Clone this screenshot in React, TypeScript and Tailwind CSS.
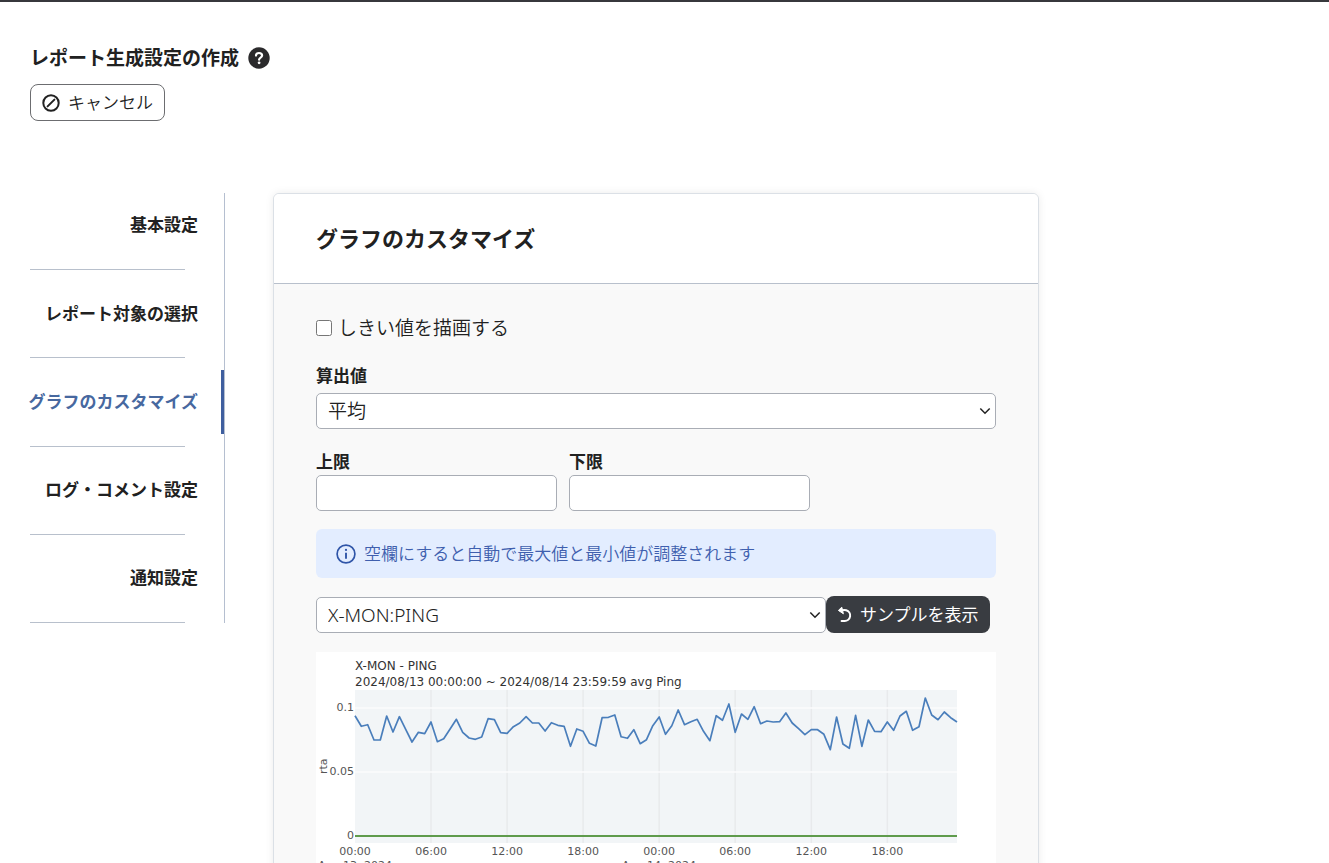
import { useState } from "react";

const steps = [
  "基本設定",
  "レポート対象の選択",
  "グラフのカスタマイズ",
  "ログ・コメント設定",
  "通知設定",
];

// 30-minute averages, 385 units = 0.1
const samples = [
  361, 329, 334, 288, 288, 360, 312, 358, 320, 282, 311, 307, 342, 283, 292, 321,
  350, 311, 294, 290, 297, 352, 349, 310, 308, 328, 339, 358, 339, 339, 315, 340,
  332, 329, 269, 321, 314, 278, 270, 355, 356, 363, 298, 293, 319, 277, 289, 331,
  357, 305, 331, 378, 334, 343, 350, 314, 286, 361, 347, 396, 311, 366, 350, 388,
  337, 345, 342, 343, 369, 339, 322, 304, 319, 319, 305, 259, 357, 276, 263, 362,
  269, 348, 314, 313, 342, 317, 360, 374, 317, 328, 414, 363, 349, 372, 355, 342,
];

const hours = ["00:00", "06:00", "12:00", "18:00", "00:00", "06:00", "12:00", "18:00"];

const PLOT_LEFT = 39;
const PLOT_RIGHT = 641;
const ZERO_Y = 184;
const STEP = (PLOT_RIGHT - PLOT_LEFT) / (samples.length - 1);

const HelpIcon = () => (
  <svg viewBox="0 0 22 22" className="size-[22px]" fill="none" aria-hidden="true">
    <circle cx="11" cy="11" r="10.7" fill="#2b2a2c" />
    <path
      d="M8 8.6C8 6.9 9.2 6 11 6s3.1 1 3.1 2.6c0 2.1-3 2-3 4.1"
      stroke="#fff"
      strokeWidth="2.2"
      strokeLinecap="round"
    />
    <circle cx="11.1" cy="15.8" r="1.4" fill="#fff" />
  </svg>
);

const CancelIcon = () => (
  <svg viewBox="0 0 18 18" className="size-[18px]" fill="none" stroke="#212121" aria-hidden="true">
    <circle cx="9" cy="9" r="7.7" strokeWidth="2" />
    <path d="M5.6 12.4l6.8-6.8" strokeWidth="2" strokeLinecap="round" />
  </svg>
);

const InfoIcon = () => (
  <svg viewBox="0 0 20 20" className="size-5" fill="none" stroke="#2f55a8" aria-hidden="true">
    <circle cx="10" cy="10" r="8.9" strokeWidth="1.7" />
    <path d="M10 8.8v6" strokeWidth="1.9" />
    <circle cx="10" cy="5.9" r="1.1" fill="#2f55a8" stroke="none" />
  </svg>
);

const UndoIcon = () => (
  <svg viewBox="0 0 16 18" className="h-[18px] w-4" fill="none" aria-hidden="true">
    <path
      d="M3.5 4.6c2-.6 4-.8 5.7-.3a5.4 5.4 0 0 1-1.7 10.6H4.6"
      stroke="#fff"
      strokeWidth="2"
      strokeLinecap="round"
    />
    <path d="M1.4 4.4L4.8 1.2l1.6 6.6z" fill="#fff" stroke="#fff" strokeLinejoin="round" />
  </svg>
);

const Chevron = () => (
  <svg
    viewBox="0 0 12 8"
    className="pointer-events-none absolute top-1/2 right-[5px] h-2 w-3 -translate-y-1/2"
    fill="none"
    aria-hidden="true"
  >
    <path d="M1.3 1.5L6 6.2l4.7-4.7" stroke="#212121" strokeWidth="1.5" />
  </svg>
);

const PingChart = () => {
  const points = samples
    .map((v, i) => `${(PLOT_LEFT + i * STEP).toFixed(1)},${(ZERO_Y - v / 3).toFixed(1)}`)
    .join(" ");

  return (
    <svg
      viewBox="0 0 680 240"
      className="block w-full bg-white font-['DejaVu_Sans',sans-serif] text-[11px] font-normal"
      role="img"
      aria-label="X-MON - PING"
    >
      <g fill="#333" className="text-[12px]">
        <text x="39" y="18">X-MON - PING</text>
        <text x="39" y="34">2024/08/13 00:00:00 ~ 2024/08/14 23:59:59 avg Ping</text>
      </g>
      <rect x="39" y="38" width="602" height="153" fill="#f2f5f7" />
      {hours.slice(1).map((_, i) => (
        <path key={i} d={`M${(PLOT_LEFT + (i + 1) * 12 * STEP).toFixed(1)} 38v153`} stroke="#e8eaec" strokeWidth="1.5" />
      ))}
      <path d="M39 56h602M39 120h602" stroke="#fbfcfd" strokeWidth="1.5" />
      <polyline points={points} fill="none" stroke="#4a7ebb" strokeWidth="1.7" strokeLinejoin="round" />
      <path d="M39 184h602" stroke="#5f9b4c" strokeWidth="2" />
      <g fill="#555" textAnchor="end">
        <text x="38" y="59">0.1</text>
        <text x="38" y="123">0.05</text>
        <text x="38" y="187">0</text>
      </g>
      <text transform="translate(11 122) rotate(-90)" fill="#555">rta</text>
      <g fill="#555" textAnchor="middle">
        {hours.map((h, i) => (
          <text key={i} x={PLOT_LEFT + i * 12 * STEP} y="203">{h}</text>
        ))}
        <text x="39" y="217">Aug 13, 2024</text>
        <text x="343" y="217">Aug 14, 2024</text>
      </g>
    </svg>
  );
};

const App = () => {
  const [drawThreshold, setDrawThreshold] = useState(false);
  const [upper, setUpper] = useState("");
  const [lower, setLower] = useState("");

  return (
    <div className="min-h-screen border-t-2 border-[#37383c] bg-white px-[30px] pt-11 font-['Noto_Sans','Noto_Sans_CJK_JP',sans-serif] font-[350] text-[#212121]">
      <header>
        <div className="flex items-center gap-[9px]">
          <h1 className="text-[19px] leading-6 font-bold">レポート生成設定の作成</h1>
          <button type="button" aria-label="ヘルプ">
            <HelpIcon />
          </button>
        </div>
        <button
          type="button"
          className="mt-[14px] flex h-[37px] items-center gap-2 rounded-lg border border-[#6c6d70] px-[11px] text-[17px]"
        >
          <CancelIcon />
          キャンセル
        </button>
      </header>

      <div className="mt-[72px] flex items-start gap-12">
        <nav className="w-[195px] shrink-0">
          <ul className="flex h-[430px] flex-col justify-between border-r border-[#b5bfd0]">
            {steps.map((step, i) => (
              <li key={step}>
                <a
                  href="#"
                  className={
                    i === 2
                      ? "flex h-16 items-center justify-end border-r-3 border-[#3f5f9f] pr-[23px] text-[17px] font-bold whitespace-nowrap text-[#47689f]"
                      : "flex h-16 items-center justify-end pr-[26px] text-[17px] font-bold whitespace-nowrap"
                  }
                >
                  {step}
                </a>
                <hr className="mt-3 w-[155px] border-[#b8c0cc]" />
              </li>
            ))}
          </ul>
        </nav>

        <main className="max-w-[766px] flex-1 overflow-hidden rounded-md border border-[#dbe0e6] bg-[#f9f9f9] shadow-[0_0_8px_rgba(0,0,0,0.08)]">
          <div className="border-b border-[#b8c0cc] bg-white px-[42px] py-7">
            <h2 className="text-[22px] leading-[33px] font-bold">グラフのカスタマイズ</h2>
          </div>

          <form className="px-[42px] pt-8 pb-10" onSubmit={(e) => e.preventDefault()}>
            <label className="flex items-center gap-[6px] text-[19px] leading-6">
              <input
                type="checkbox"
                className="size-4"
                checked={drawThreshold}
                onChange={(e) => setDrawThreshold(e.target.checked)}
              />
              しきい値を描画する
            </label>

            <label htmlFor="calc" className="mt-6 block text-[17px] leading-6 font-bold">算出値</label>
            <div className="relative mt-[5px]">
              <select
                id="calc"
                className="block h-9 w-full appearance-none rounded-[5px] border border-[#a9adb5] bg-white pr-8 pl-[11px] text-[19px] leading-8"
              >
                <option>平均</option>
                <option>最大</option>
                <option>最小</option>
              </select>
              <Chevron />
            </div>

            <div className="mt-[21px] flex gap-3">
              <div className="w-[241px]">
                <label htmlFor="upper" className="block text-[17px] leading-6 font-bold">上限</label>
                <input
                  id="upper"
                  type="text"
                  value={upper}
                  onChange={(e) => setUpper(e.target.value)}
                  className="mt-px block h-9 w-full rounded-[5px] border border-[#a9adb5] bg-white px-[11px] text-[19px]"
                />
              </div>
              <div className="w-[241px]">
                <label htmlFor="lower" className="block text-[17px] leading-6 font-bold">下限</label>
                <input
                  id="lower"
                  type="text"
                  value={lower}
                  onChange={(e) => setLower(e.target.value)}
                  className="mt-px block h-9 w-full rounded-[5px] border border-[#a9adb5] bg-white px-[11px] text-[19px]"
                />
              </div>
            </div>

            <div className="mt-[18px] flex h-[49px] items-center gap-2 rounded-md bg-[#e3edff] px-5 text-[17px] text-[#3f5fae]">
              <InfoIcon />
              空欄にすると自動で最大値と最小値が調整されます
            </div>

            <div className="mt-[18px] flex items-center">
              <div className="relative w-3/4">
                <select
                  aria-label="サンプル対象"
                  className="block h-9 w-full appearance-none rounded-[5px] border border-[#a9adb5] bg-white pr-8 pl-[11px] text-[19px] leading-8"
                >
                  <option>X-MON:PING</option>
                </select>
                <Chevron />
              </div>
              <button
                type="button"
                className="flex h-[37px] items-center gap-[7px] rounded-lg bg-[#393c41] px-[11px] text-[17px] font-normal whitespace-nowrap text-white"
              >
                <UndoIcon />
                サンプルを表示
              </button>
            </div>

            <div className="mt-[19px]">
              <PingChart />
            </div>
          </form>
        </main>
      </div>
    </div>
  );
};

export default App;
